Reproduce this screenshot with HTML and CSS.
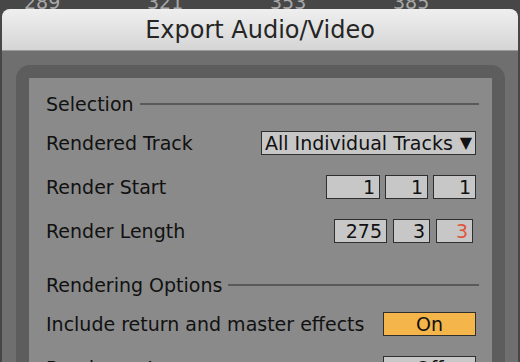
FILE: index.html
```html
<!DOCTYPE html>
<html lang="en">
<head>
  <meta charset="UTF-8">
  <meta name="viewport" content="width=device-width, initial-scale=1.0">
  <title>Export Audio/Video</title>
  <link rel="stylesheet" href="styles.css">
</head>
<body>
  <div class="ruler">
    <span class="mark">289</span>
    <span class="mark">321</span>
    <span class="mark">353</span>
    <span class="mark">385</span>
  </div>
  <div class="window">
    <div class="titlebar">Export Audio/Video</div>
    <div class="body">
      <div class="panel">
        <div class="section">Selection</div>
        <div class="row">
          <span>Rendered Track</span>
          <div class="select">All Individual Tracks<span class="arrow">▼</span></div>
        </div>
        <div class="row">
          <span>Render Start</span>
          <div class="fields">
            <div class="field w54">1</div>
            <div class="field w43">1</div>
            <div class="field w43">1</div>
          </div>
        </div>
        <div class="row">
          <span>Render Length</span>
          <div class="fields inset">
            <div class="field w53">275</div>
            <div class="field w37">3</div>
            <div class="field w37 red">3</div>
          </div>
        </div>
        <div class="section second">Rendering Options</div>
        <div class="row">
          <span>Include return and master effects</span>
          <div class="toggle on">On</div>
        </div>
        <div class="row">
          <span>Render as Loop</span>
          <div class="toggle">Off</div>
        </div>
      </div>
    </div>
  </div>
</body>
</html>
```

FILE: styles.css
```css
body {
  margin: 0;
  background: #474747;
  font-family: "DejaVu Sans", sans-serif;
  overflow: hidden;
}

.ruler {
  height: 9px;
  overflow: hidden;
  display: flex;
  align-items: flex-end;
  padding-left: 24px;
  gap: 87px;
}
.ruler .mark {
  font-size: 19px;
  line-height: 19px;
  color: #a9a9a9;
  margin-bottom: -3px;
  width: 36px;
  position: relative;
}
.ruler .mark::before {
  content: "-";
  position: absolute;
  left: -8px;
  font-size: 12px;
  bottom: 6px;
}

.window {
  margin: 0 2px;
  background: #6f6f6f;
  border-radius: 8px 8px 0 0;
  overflow: hidden;
  height: 353px;
}

.titlebar {
  height: 41px;
  line-height: 43px;
  text-align: center;
  font-size: 24px;
  color: #252525;
  background: linear-gradient(#efefef, #d5d5d5);
  border-bottom: 1px solid #9a9a9a;
}

.body {
  padding: 14px 13px 0 14px;
}

.panel {
  background: #8a8a8a;
  border: 13px solid #5d5d5d;
  border-radius: 14px;
  padding: 9px 16px 0 17px;
  height: 320px;
  font-size: 19px;
  color: #111;
}

.section {
  height: 34px;
  display: flex;
  align-items: center;
  gap: 6px;
}
.section::after {
  content: "";
  flex: 1;
  height: 2px;
  background: #5a5a5a;
  margin-right: -3px;
}
.section.second {
  margin-top: 15px;
}

.row {
  height: 44px;
  display: flex;
  align-items: center;
  justify-content: space-between;
}

.select, .field, .toggle {
  height: 22px;
  line-height: 22px;
  border: 1px solid #2f2f2f;
  background: #c7c7c7;
  color: #111;
}

.select {
  width: 207px;
  padding: 0 3px;
  display: flex;
  justify-content: space-between;
}
.select .arrow {
  font-size: 16px;
}

.fields {
  display: flex;
  gap: 5px;
}
.fields.inset {
  gap: 6px;
  margin-right: 3px;
}
.field {
  text-align: right;
  padding-right: 4px;
  box-sizing: border-box;
  height: 24px;
}
.w54 { width: 54px; }
.w43 { width: 43px; }
.w53 { width: 53px; }
.w37 { width: 37px; }
.field.red { color: #e0553c; }

.toggle {
  width: 91px;
  text-align: center;
}
.toggle.on {
  background: #f4b54b;
}
```
